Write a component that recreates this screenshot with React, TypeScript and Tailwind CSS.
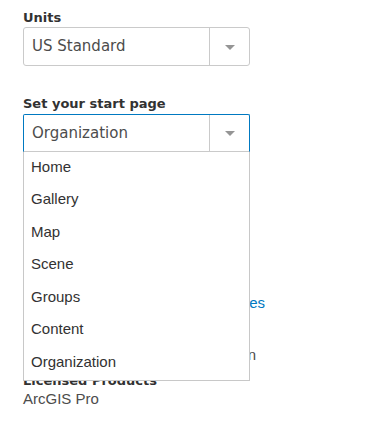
const options = ["Home", "Gallery", "Map", "Scene", "Groups", "Content", "Organization"];

const verdana = "font-['DejaVu_Sans',Verdana,sans-serif]";
const arial = "font-['Liberation_Sans',Arial,sans-serif]";

function Arrow() {
  return (
    <svg width="10" height="5" viewBox="0 0 10 5" aria-hidden="true">
      <path d="M0 0 H10 L5 5 Z" fill="#959595" />
    </svg>
  );
}

function Select({ value, open }: { value: string; open?: boolean }) {
  return (
    <div className="relative w-[227px]">
      <div
        className={
          open
            ? "flex h-[38px] items-stretch rounded-t-[2px] border border-[#0079c1] border-b-[#cacaca] bg-white"
            : "flex h-[39px] items-stretch rounded-[3px] border border-[#cacaca] bg-white"
        }
      >
        <div className={`flex flex-1 items-center pl-[8px] text-[15px] text-[#4c4c4c] ${verdana}`}>{value}</div>
        <div className="flex w-[40px] items-center justify-center border-l border-[#cacaca] pt-[1px]">
          <Arrow />
        </div>
      </div>
      {open && (
        <ul className={`absolute left-0 top-full z-10 w-full border border-t-0 border-[#c8c8c8] bg-white ${arial}`}>
          {options.map((o) => (
            <li key={o} className="flex h-[32.5px] items-center pb-[3px] pl-[7px] text-[15px] text-[#323232]">
              {o}
            </li>
          ))}
        </ul>
      )}
    </div>
  );
}

export default function App() {
  return (
    <div className="h-[429px] w-[372px] overflow-hidden bg-white pl-[23px] pt-[10px]">
      <div className={`text-[13px] font-bold leading-[16px] text-[#323232] ${verdana}`}>Units</div>
      <div className="mt-[1px]">
        <Select value="US Standard" />
      </div>

      <div className={`mt-[30px] text-[13px] font-bold leading-[16px] text-[#323232] ${verdana}`}>
        Set your start page
      </div>
      <div className="mt-[2px]">
        <Select value="Organization" open />
      </div>

      <div className={`mt-[142px] w-[242px] text-right text-[15px] leading-[18px] text-[#0079c1] ${arial}`}>
        View privileges
      </div>
      <div className={`mt-[34px] w-[233px] text-right text-[15px] leading-[18px] text-[#4c4c4c] ${arial}`}>
        Organization
      </div>
      <div className={`mt-[9px] text-[13px] font-bold leading-[16px] text-[#323232] ${verdana}`}>
        Licensed Products
      </div>
      <div className={`mt-[1px] text-[15px] leading-[17px] text-[#4c4c4c] ${arial}`}>ArcGIS Pro</div>
    </div>
  );
}
